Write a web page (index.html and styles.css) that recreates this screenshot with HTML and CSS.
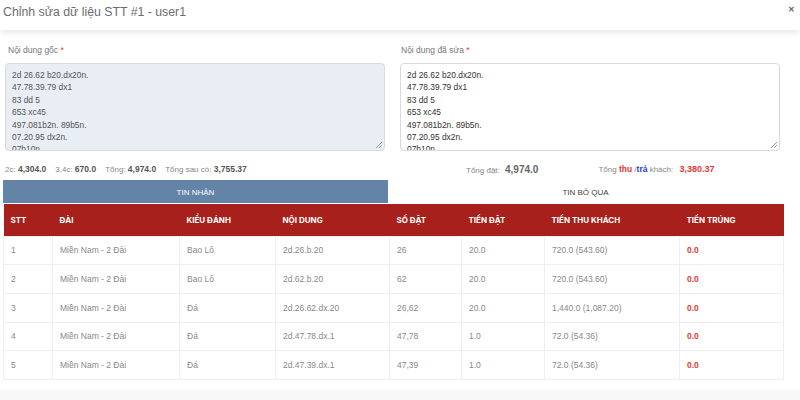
FILE: index.html
```html
<!DOCTYPE html>
<html lang="vi">
<head>
<meta charset="utf-8">
<link rel="stylesheet" href="styles.css">
</head>
<body>
<div class="modal">
  <header class="modal-header">
    <h1 class="title">Chỉnh sửa dữ liệu STT #1 - user1</h1>
    <span class="close">✕</span>
  </header>
  <div class="modal-body">
    <div class="form-row">
      <div class="field">
        <label class="label">Nội dung gốc <span class="req">*</span></label>
        <div class="textarea readonly">2d 26.62 b20.dx20n.
47.78.39.79 dx1
83 dd 5
653 xc45
497.081b2n. 89b5n.
07.20.95 dx2n.
07b10n.</div>
      </div>
      <div class="field">
        <label class="label">Nội dung đã sửa <span class="req">*</span></label>
        <div class="textarea">2d 26.62 b20.dx20n.
47.78.39.79 dx1
83 dd 5
653 xc45
497.081b2n. 89b5n.
07.20.95 dx2n.
07b10n.</div>
      </div>
    </div>
    <div class="stats">
      <div class="stats-left">
        <span class="stat">2c: <b>4,304.0</b></span>
        <span class="stat">3,4c: <b>670.0</b></span>
        <span class="stat">Tổng: <b>4,974.0</b></span>
        <span class="stat">Tổng sau cò: <b>3,755.37</b></span>
      </div>
      <div class="stats-right">
        <span class="stat">Tổng đặt: <b class="big">4,974.0</b></span>
        <span class="stat">Tổng <b class="red">thu</b> /<b class="blue">trả</b> khách: <b class="red big2">3,380.37</b></span>
      </div>
    </div>
    <div class="tabs">
      <div class="tab active">TIN NHẬN</div>
      <div class="tab">TIN BỎ QUA</div>
    </div>
    <table class="grid">
      <colgroup>
        <col style="width:49px"><col style="width:127px"><col style="width:96px"><col style="width:114px"><col style="width:72px"><col style="width:83px"><col style="width:135px"><col style="width:104px">
      </colgroup>
      <thead>
        <tr><th>STT</th><th>ĐÀI</th><th>KIỂU ĐÁNH</th><th>NỘI DUNG</th><th>SỐ ĐẶT</th><th>TIỀN ĐẶT</th><th>TIỀN THU KHÁCH</th><th>TIỀN TRÚNG</th></tr>
      </thead>
      <tbody>
        <tr><td>1</td><td>Miền Nam - 2 Đài</td><td>Bao Lô</td><td>2d.26.b.20</td><td>26</td><td>20.0</td><td>720.0 (543.60)</td><td class="win">0.0</td></tr>
        <tr><td>2</td><td>Miền Nam - 2 Đài</td><td>Bao Lô</td><td>2d.62.b.20</td><td>62</td><td>20.0</td><td>720.0 (543.60)</td><td class="win">0.0</td></tr>
        <tr><td>3</td><td>Miền Nam - 2 Đài</td><td>Đá</td><td>2d.26.62.dx.20</td><td>26,62</td><td>20.0</td><td>1,440.0 (1,087.20)</td><td class="win">0.0</td></tr>
        <tr><td>4</td><td>Miền Nam - 2 Đài</td><td>Đá</td><td>2d.47.78.dx.1</td><td>47,78</td><td>1.0</td><td>72.0 (54.36)</td><td class="win">0.0</td></tr>
        <tr><td>5</td><td>Miền Nam - 2 Đài</td><td>Đá</td><td>2d.47.39.dx.1</td><td>47,39</td><td>1.0</td><td>72.0 (54.36)</td><td class="win">0.0</td></tr>
      </tbody>
    </table>
  </div>
  <div class="footer-band"></div>
</div>
</body>
</html>
```
FILE: styles.css
```css
* { box-sizing: border-box; }
html, body { margin: 0; padding: 0; background: #fff; }
body {
  font-family: "Liberation Sans", Arial, sans-serif;
  color: #555;
  width: 800px;
  height: 400px;
  overflow: hidden;
}
.modal { display: flex; flex-direction: column; }
.modal-header {
  height: 30px;
  display: flex;
  align-items: center;
  justify-content: space-between;
  padding: 0 5px 6px 3px;
  box-shadow: 0 3px 6px rgba(0,0,0,0.09);
  position: relative;
  z-index: 1;
}
.title {
  margin: 0;
  font-size: 12.3px;
  font-weight: 400;
  color: #6a6d72;
}
.close {
  font-size: 8px;
  font-weight: 700;
  color: #666;
  align-self: flex-start;
  margin-top: 5px;
}
.modal-body { padding: 13px 17px 0 3px; }
.form-row {
  display: grid;
  grid-template-columns: 382px 380px;
  column-gap: 15px;
}
.field { display: flex; flex-direction: column; }
.label {
  font-size: 8.5px;
  color: #777;
  margin-left: 5px;
  height: 14px;
  line-height: 14px;
  margin-bottom: 6px;
}
.field:last-child .label { margin-left: 1px; }
.req { color: #e53935; }
.textarea {
  position: relative;
  height: 88px;
  border: 1px solid #d6d9de;
  border-radius: 4px;
  padding: 5px 6px 0;
  font-size: 8.4px;
  line-height: 12.4px;
  color: #333;
  white-space: pre;
  overflow: hidden;
  background: #fff;
}
.textarea::after {
  content: "";
  position: absolute;
  right: 2px;
  bottom: 2px;
  width: 6px;
  height: 6px;
  background: linear-gradient(135deg, transparent 45%, #999 45%, #999 55%, transparent 55%, transparent 72%, #999 72%, #999 82%, transparent 82%);
}
.field:first-child .textarea { margin-left: 2px; }
.textarea.readonly { background: #e9edf4; color: #555; }
.stats {
  display: flex;
  align-items: center;
  height: 22px;
  margin-top: 7px;
  padding-left: 2px;
}
.stats-left { display: flex; gap: 9px; width: 461px; }
.stats-right { display: flex; gap: 60px; }
.stat { font-size: 8px; color: #888; }
.stat b { color: #555; font-weight: 700; font-size: 8.5px; }
.stat b.big { font-size: 10px; margin-left: 3px; color: #666; }
.stat b.red { color: #e53935; }
.stat b.blue { color: #1b3fd9; }
.stat b.big2 { font-size: 9px; margin-left: 4px; }
.tabs {
  display: grid;
  grid-template-columns: 385px 395px;
  height: 23px;
  margin-top: 0;
}
.tab {
  display: flex;
  align-items: center;
  justify-content: center;
  font-size: 8px;
  color: #444;
  padding-top: 2px;
}
.tab.active { background: #6383a7; color: #fff; }
.grid {
  width: 780px;
  border-collapse: collapse;
  table-layout: fixed;
  margin-top: 1px;
}
.grid th {
  background: #a8201b;
  color: #fff;
  font-family: Inter, "Liberation Sans", sans-serif;
  font-size: 8px;
  font-weight: 700;
  text-align: left;
  height: 32px;
  padding: 0 7px;
}
.grid td {
  height: 28.7px;
  padding: 0 7px;
  font-size: 8.5px;
  color: #888;
  border: 1px solid #eceef3;
}
.grid td.win { color: #e53935; font-weight: 700; }
.footer-band {
  margin-top: 11px;
  height: 20px;
  background: #f7f8fa;
  box-shadow: 0 -1px 3px rgba(0,0,0,0.04);
}
```
